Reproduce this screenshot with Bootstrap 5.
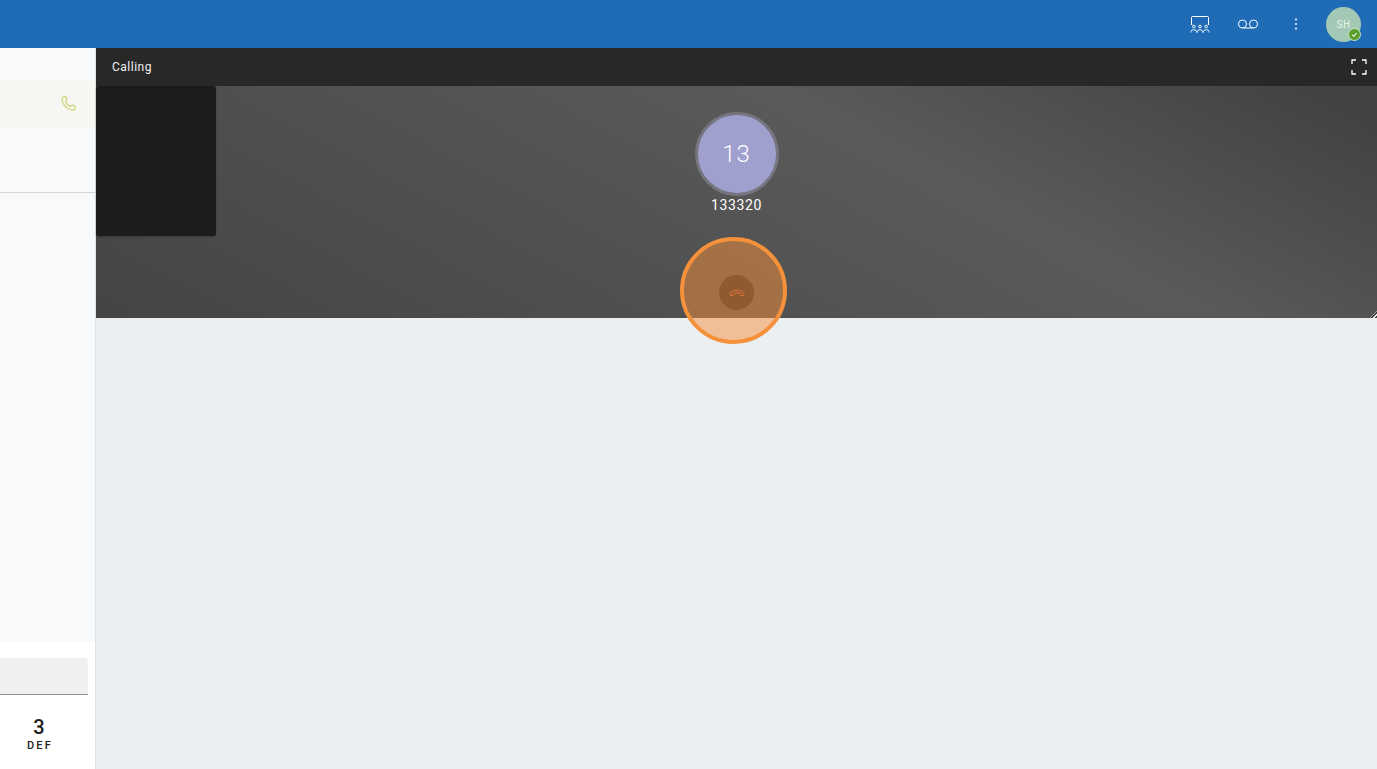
<!DOCTYPE html>
<html lang="en">

<head>
  <meta charset="UTF-8" />
  <meta name="viewport" content="width=device-width, initial-scale=1.0" />
  <title>Calling</title>
  <link href="https://cdn.jsdelivr.net/npm/bootstrap@5.3.0/dist/css/bootstrap.min.css" rel="stylesheet" />
  <script src="https://cdn.jsdelivr.net/npm/bootstrap@5.3.0/dist/js/bootstrap.bundle.min.js"></script>
  <style>
    html, body { height: 100%; overflow: hidden; }
    body { font-family: Roboto, "Liberation Sans", sans-serif; background: #ebeff2; }

    .top-bar { height: 48px; background: #1f6bb5; padding-right: 16px; }
    .top-icon { width: 48px; height: 48px; color: #fff; }
    .user-chip { width: 35px; height: 35px; margin-left: 6px; background: #a3c9b6; color: #e8f2ec; font-size: 10px; letter-spacing: .5px; }
    .user-state { right: 0; bottom: 1px; width: 13px; height: 13px; background: #5a9e2c; border: 1px solid #cfe3c4; }

    .page-body { height: 721px; }
    .side-pane { width: 96px; border-right: 1px solid #dfe3e6; background: #fff; }
    .side-list { height: 594px; background: #f8f9fb; }
    .side-gap { height: 32px; }
    .call-row { height: 48px; background: #f6f6f3; padding-right: 19px; }
    .side-rule { height: 65px; border-bottom: 1px solid #d4d6d8; }
    .dial-area { height: 127px; padding: 16px 7px 0 0; }
    .dial-input { height: 37px; background: #f0f0f0; border-bottom: 1px solid #8c8c8c; border-top-right-radius: 4px; }
    .dial-key { width: 78px; margin-top: 21px; color: #212121; }
    .dial-num { font-size: 20px; line-height: 23px; font-weight: 500; }
    .dial-txt { font-size: 11px; line-height: 14px; letter-spacing: 2.2px; padding-left: 2px; font-weight: 500; }

    .call-pane { min-width: 0; }
    .call-head { height: 38px; background: #282828; color: #f2f2f2; font-size: 12px; letter-spacing: .5px; padding: 0 10px 0 16px; }
    .call-stage { height: 232px; padding-top: 26px; color: #fff; background: linear-gradient(28deg, #444 0%, #5a5a5a 65%, #424242 96%); }
    .thumb-box { left: 0; top: 0; width: 120px; height: 150px; background: #1c1c1c; border-radius: 3px; box-shadow: 0 1px 2px rgba(0, 0, 0, .25); }
    .peer-circle { width: 84px; height: 84px; background: #a0a0cf; border: 3px solid #75757f; font-size: 24px; font-weight: 300; letter-spacing: 1px; }
    .peer-num { font-size: 14px; line-height: 20px; letter-spacing: .6px; margin-top: -1px; color: #fff; }
    .grip { right: 0; bottom: 0; width: 7px; height: 7px; background: repeating-linear-gradient(135deg, transparent 0 1px, #e8e8e8 1px 2px, #333 2px 3px); clip-path: polygon(100% 0, 100% 100%, 0 100%); }
    .ring-pulse { left: 584px; top: 151px; width: 107px; height: 107px; background: rgba(245, 143, 60, .5); border: 4px solid #f6913b; z-index: 2; }
    .hang-btn { left: 35px; top: 34px; width: 35px; height: 35px; background: #8f5a30; }
  </style>
</head>

<body>
  <div class="top-bar d-flex align-items-center justify-content-end">
    <div class="top-icon d-flex align-items-center justify-content-center">
      <svg width="20" height="17" viewBox="0 0 20 17" fill="none" stroke="currentColor" stroke-width="1">
        <path d="M1.500 9V1.500a1 1 0 0 1 1-1h15a1 1 0 0 1 1 1V9" />
        <circle cx="3.800" cy="10.500" r="1.300" />
        <circle cx="10" cy="10.500" r="1.300" />
        <circle cx="16.200" cy="10.500" r="1.300" />
        <path d="M1 16.500v-1c0-1 1-1.700 2.800-1.700s2.700.7 2.700 1.700v1M7.400 16.500v-1c0-1 1-1.700 2.600-1.700s2.600.7 2.600 1.700v1M13.500 16.500v-1c0-1 1-1.700 2.700-1.700s2.800.7 2.800 1.700v1" />
      </svg>
    </div>
    <div class="top-icon d-flex align-items-center justify-content-center">
      <svg width="20" height="10" viewBox="0 0 20 10" fill="none" stroke="currentColor" stroke-width="1">
        <circle cx="4.500" cy="5" r="4" />
        <circle cx="15.500" cy="5" r="4" />
        <path d="M4.500 9h11" />
      </svg>
    </div>
    <div class="top-icon d-flex align-items-center justify-content-center">
      <svg width="4" height="12" viewBox="0 0 4 12" fill="currentColor">
        <circle cx="2" cy="1.500" r="1" />
        <circle cx="2" cy="6" r="1" />
        <circle cx="2" cy="10.500" r="1" />
      </svg>
    </div>
    <div class="user-chip rounded-circle position-relative d-flex align-items-center justify-content-center">
      SH
      <span class="user-state rounded-circle position-absolute d-flex align-items-center justify-content-center">
        <svg width="7" height="7" viewBox="0 0 8 8" fill="none" stroke="#fff" stroke-width="1.200"><path d="M1.500 4.300l1.700 1.600 3.300-3.600" /></svg>
      </span>
    </div>
  </div>

  <div class="page-body d-flex">
    <div class="side-pane flex-shrink-0">
      <div class="side-list">
        <div class="side-gap"></div>
        <div class="call-row d-flex align-items-center justify-content-end">
          <svg width="16" height="16" viewBox="0 0 16 16" fill="none" stroke="#cfd472" stroke-width="1.200">
            <path d="M3 1.200l2-.7c.5-.1.800.1 1 .5l1 2.500c.1.400 0 .7-.3 1L5.600 5.400c.6 2 2.500 4 4.900 5l1-1.100c.3-.3.700-.3 1-.2l2.400 1.200c.4.200.6.600.4 1l-.7 2c-.2.600-.7.900-1.300.9C7 13.800 2.100 8.500 2 2.400c0-.5.400-1 1-1.200z" />
          </svg>
        </div>
        <div class="side-rule"></div>
      </div>
      <div class="dial-area">
        <div class="dial-input"></div>
        <div class="dial-key d-flex flex-column align-items-center">
          <span class="dial-num">3</span>
          <span class="dial-txt">DEF</span>
        </div>
      </div>
    </div>

    <div class="call-pane flex-grow-1">
      <div class="call-head d-flex align-items-center justify-content-between">
        <span>Calling</span>
        <svg width="16" height="16" viewBox="0 0 16 16" fill="none" stroke="#fff" stroke-width="1.300">
          <path d="M1 5V1h4M11 1h4v4M15 11v4h-4M5 15H1v-4" />
        </svg>
      </div>
      <div class="call-stage position-relative d-flex flex-column align-items-center">
        <div class="thumb-box position-absolute"></div>
        <div class="peer-circle rounded-circle d-flex align-items-center justify-content-center">13</div>
        <div class="peer-num">133320</div>
        <div class="grip position-absolute"></div>
        <div class="ring-pulse rounded-circle position-absolute">
          <div class="hang-btn rounded-circle position-absolute d-flex align-items-center justify-content-center">
            <svg width="16" height="8" viewBox="0 0 16 8" fill="none" stroke="#e8743a" stroke-width="1">
              <path d="M1 5.500c0-1 .3-1.700 1-2.300C3.500 1.900 5.700 1.200 8 1.200s4.500.7 6 2c.7.600 1 1.300 1 2.300 0 .6-.4 1-1 1h-1.700c-.5 0-.8-.3-.9-.8l-.2-1.200C10.300 4 9.200 3.800 8 3.800s-2.300.2-3.200.7l-.2 1.200c-.1.500-.4.800-.9.800H2c-.6 0-1-.4-1-1z" />
            </svg>
          </div>
        </div>
      </div>
    </div>
  </div>
</body>

</html>
